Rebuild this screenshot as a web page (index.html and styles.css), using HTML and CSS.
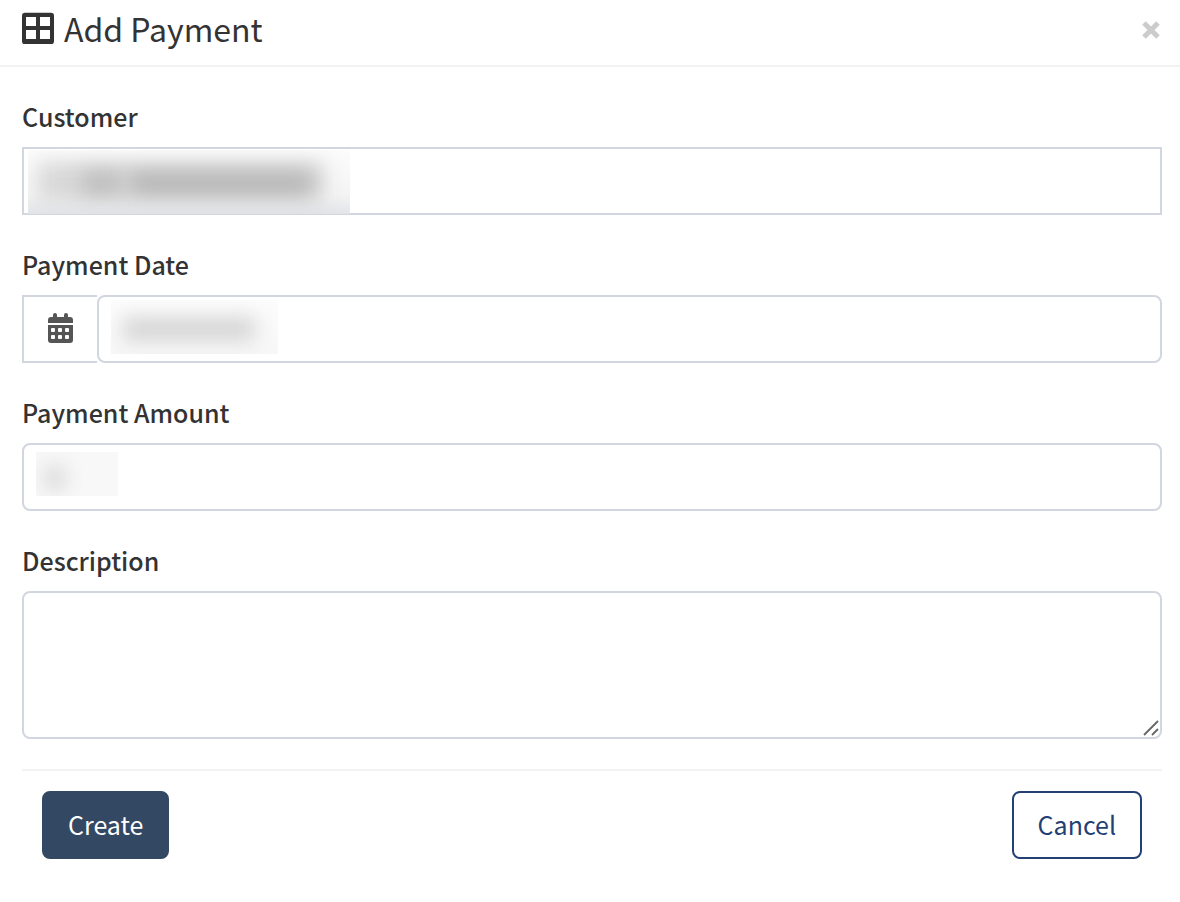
FILE: index.html
```
<!DOCTYPE html>
<html lang="en">
<head>
    <meta charset="UTF-8">
    <meta name="viewport" content="width=device-width, initial-scale=1.0">
    <title>Add Payment</title>
    <link rel="stylesheet" href="styles.css">
</head>
<body>
    <header class="modal-header">
        <h1 class="modal-title">
            <svg width="32" height="32" viewBox="0 0 32 32" aria-hidden="true">
                <path fill="#333" fill-rule="evenodd" d="M3 .7h26a3 3 0 0 1 3 3v25.600a3 3 0 0 1-3 3H3a3 3 0 0 1-3-3V3.700a3 3 0 0 1 3-3zM4 5v9h10V5zM18 5v9h10V5zM4 18v9h10v-9zM18 18v9h10v-9z"/>
            </svg>
            Add Payment
        </h1>
        <button type="button" class="close" aria-label="Close">
            <svg width="18" height="18" viewBox="0 0 18 18">
                <path stroke="#ccc" stroke-width="5" d="M2 2l14 14M16 2L2 16"/>
            </svg>
        </button>
    </header>

    <form class="modal-body">
        <div class="form-group">
            <label for="customer">Customer</label>
            <div class="field">
                <input type="text" id="customer" class="form-control square">
                <div class="redacted redacted-customer"><i></i><i></i><i></i></div>
            </div>
        </div>

        <div class="form-group">
            <label for="date">Payment Date</label>
            <div class="input-group">
                <span class="addon">
                    <svg width="25" height="30" viewBox="0 0 25 30" aria-hidden="true">
                        <path fill="#555" d="M0 9V6a3 3 0 0 1 3-3h2V1a2 2 0 0 1 4 0v2h7V1a2 2 0 0 1 4 0v2h2a3 3 0 0 1 3 3v3zM0 11h25v15a3 3 0 0 1-3 3H3a3 3 0 0 1-3-3z"/>
                        <g fill="#fff">
                            <rect x="3" y="14" width="4" height="4" rx="1"/>
                            <rect x="10" y="14" width="4" height="4" rx="1"/>
                            <rect x="17" y="14" width="4" height="4" rx="1"/>
                            <rect x="3" y="21" width="4" height="4" rx="1"/>
                            <rect x="10" y="21" width="4" height="4" rx="1"/>
                            <rect x="17" y="21" width="4" height="4" rx="1"/>
                        </g>
                    </svg>
                </span>
                <div class="field">
                    <input type="text" id="date" class="form-control">
                    <div class="redacted redacted-date"><i></i></div>
                </div>
            </div>
        </div>

        <div class="form-group">
            <label for="amount">Payment Amount</label>
            <div class="field">
                <input type="text" id="amount" class="form-control">
                <div class="redacted redacted-amount"><i></i></div>
            </div>
        </div>

        <div class="form-group">
            <label for="description">Description</label>
            <div class="field">
                <textarea id="description" class="form-control"></textarea>
                <svg class="grip" width="16" height="16" viewBox="0 0 16 16" aria-hidden="true">
                    <path stroke="#666" stroke-width="1.8" d="M1 15L15 1M9 15l6-6"/>
                </svg>
            </div>
        </div>

        <div class="form-actions">
            <button type="submit" class="btn btn-primary">Create</button>
            <button type="button" class="btn btn-outline">Cancel</button>
        </div>
    </form>
</body>
</html>
```
FILE: styles.css
```
* {
    box-sizing: border-box;
}

body {
    margin: 0;
    background: #fff;
    color: #333;
    font-family: "Noto Sans CJK SC", sans-serif;
    font-size: 25px;
    line-height: 34px;
}

.modal-header {
    display: flex;
    align-items: center;
    justify-content: space-between;
    padding: 4px 20px 13px 22px;
    border-bottom: 2px solid #f2f2f2;
}

.modal-title {
    display: flex;
    align-items: center;
    gap: 10px;
    margin: 0;
    font-size: 32px;
    font-weight: 400;
    line-height: 48px;
}

.close {
    display: flex;
    margin-top: 4px;
    padding: 0;
    border: 0;
    background: none;
    cursor: pointer;
}

.modal-body {
    padding: 32px 18px 40px 22px;
}

.form-group {
    margin-bottom: 32px;
}

label {
    display: block;
    margin-bottom: 14px;
    font-weight: 500;
}

.field {
    position: relative;
    flex: 1;
}

.form-control {
    display: block;
    width: 100%;
    height: 68px;
    padding: 12px 24px;
    border: 2px solid #d2d6df;
    border-radius: 8px;
    background: #fff;
    color: #555;
    font: inherit;
}

.form-control.square {
    border-radius: 0;
}

textarea.form-control {
    height: 148px;
    resize: none;
}

.grip {
    position: absolute;
    right: 3px;
    bottom: 3px;
}

.input-group {
    display: flex;
}

.addon {
    display: flex;
    align-items: center;
    justify-content: center;
    width: 75px;
    border: 2px solid #d2d6df;
    border-right: 0;
}

.addon svg {
    overflow: visible;
}

/* blurred values */
.redacted {
    position: absolute;
    overflow: hidden;
    background: #f8f8f8;
    pointer-events: none;
}

.redacted i {
    position: absolute;
    filter: blur(10px);
}

.redacted-customer {
    top: 3px;
    left: 6px;
    width: 322px;
    height: 64px;
    background: linear-gradient(#fcfcfc, #f4f4f4 70%, #e2e4e9);
}

.redacted-customer i {
    top: 12px;
    left: 10px;
    width: 286px;
    height: 40px;
    background: #d8d8d8;
}

.redacted-customer i:nth-child(2) {
    top: 22px;
    left: 54px;
    width: 40px;
    height: 22px;
    background: #bcbcbc;
}

.redacted-customer i:nth-child(3) {
    top: 22px;
    left: 102px;
    width: 182px;
    height: 22px;
    background: #b4b4b4;
}

.redacted-date {
    top: 5px;
    left: 14px;
    width: 167px;
    height: 54px;
    background: linear-gradient(#fcfcfc, #f7f7f7);
}

.redacted-date i {
    top: 18px;
    left: 12px;
    width: 132px;
    height: 22px;
    background: #d2d2d2;
}

.redacted-amount {
    top: 9px;
    left: 14px;
    width: 82px;
    height: 44px;
}

.redacted-amount i {
    top: 15px;
    left: 10px;
    width: 18px;
    height: 22px;
    background: #d2d2d2;
}

.form-group:nth-last-child(2) {
    margin-bottom: 30px;
}

.form-actions {
    display: flex;
    justify-content: space-between;
    padding: 20px;
    border-top: 2px solid #f2f2f2;
}

.btn {
    height: 68px;
    padding: 0 24px 2px;
    border: 2px solid #334863;
    border-radius: 8px;
    font: inherit;
    cursor: pointer;
}

.btn-primary {
    background: #334863;
    color: #fff;
}

.btn-outline {
    border-color: #234075;
    background: #fff;
    color: #234075;
}
```
